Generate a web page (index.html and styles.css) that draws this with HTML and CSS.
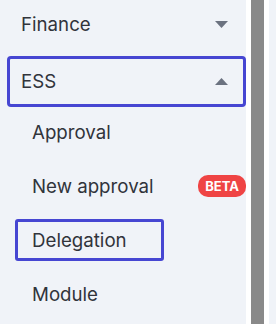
FILE: index.html
```html
<!DOCTYPE html>
<html lang="en">
<head>
  <meta charset="UTF-8">
  <title>Menu</title>
  <link rel="stylesheet" href="styles.css">
</head>
<body>

  <nav class="sidebar">
    <div class="menu-group first">
      <span>Finance</span>
      <svg class="caret" width="13" height="7" viewBox="0 0 13 7"><path d="M0 0h13L6.5 7z"/></svg>
    </div>

    <div class="menu-group focused">
      <span>ESS</span>
      <svg class="caret" width="13" height="7" viewBox="0 0 13 7"><path d="M0 7h13L6.5 0z"/></svg>
    </div>

    <ul class="submenu">
      <li class="submenu-item">Approval</li>
      <li class="submenu-item">New approval <span class="badge">BETA</span></li>
      <li class="submenu-item focused">Delegation</li>
      <li class="submenu-item">Module</li>
    </ul>
  </nav>

  <div class="scrollbar">
    <div class="thumb"></div>
  </div>

</body>
</html>
```

FILE: styles.css
```css
body {
  margin: 0;
  height: 100vh;
  background-color: #f0f3f8;
  display: flex;
  font-family: Inter, "Noto Sans", sans-serif;
  overflow: hidden;
}

.sidebar {
  width: 246px;
  flex-shrink: 0;
  overflow: hidden;
  color: #31343b;
  font-size: 18.7px;
}

.menu-group {
  height: 45px;
  margin: 0 0 4px 7px;
  padding: 0 15px 0 11px;
  border: 3px solid transparent;
  border-radius: 4px;
  display: flex;
  align-items: center;
  justify-content: space-between;
}

.menu-group.first {
  margin-top: -1px;
  margin-bottom: 6px;
}

.caret {
  fill: #6b7280;
}

.focused {
  border-color: #4646d2;
}

.submenu {
  list-style: none;
  margin: 0;
  padding: 0;
  display: flex;
  flex-direction: column;
  gap: 12px;
}

.submenu-item {
  height: 36px;
  margin-left: 15px;
  padding-left: 14px;
  border: 3px solid transparent;
  border-radius: 3px;
  display: flex;
  align-items: center;
  justify-content: space-between;
  white-space: nowrap;
}

.submenu-item.focused {
  align-self: flex-start;
  padding-right: 34px;
  border-color: #4646d2;
}

.badge {
  background-color: #ef4444;
  color: #ffffff;
  font-size: 13px;
  font-weight: bold;
  padding: 3px 7px;
  border-radius: 10px;
  margin-right: -3px;
}

.scrollbar {
  width: 23px;
  background-color: #ffffff;
  padding: 0 5px;
  box-sizing: border-box;
  flex-shrink: 0;
}

.thumb {
  height: 100%;
  background-color: #898989;
}
```
